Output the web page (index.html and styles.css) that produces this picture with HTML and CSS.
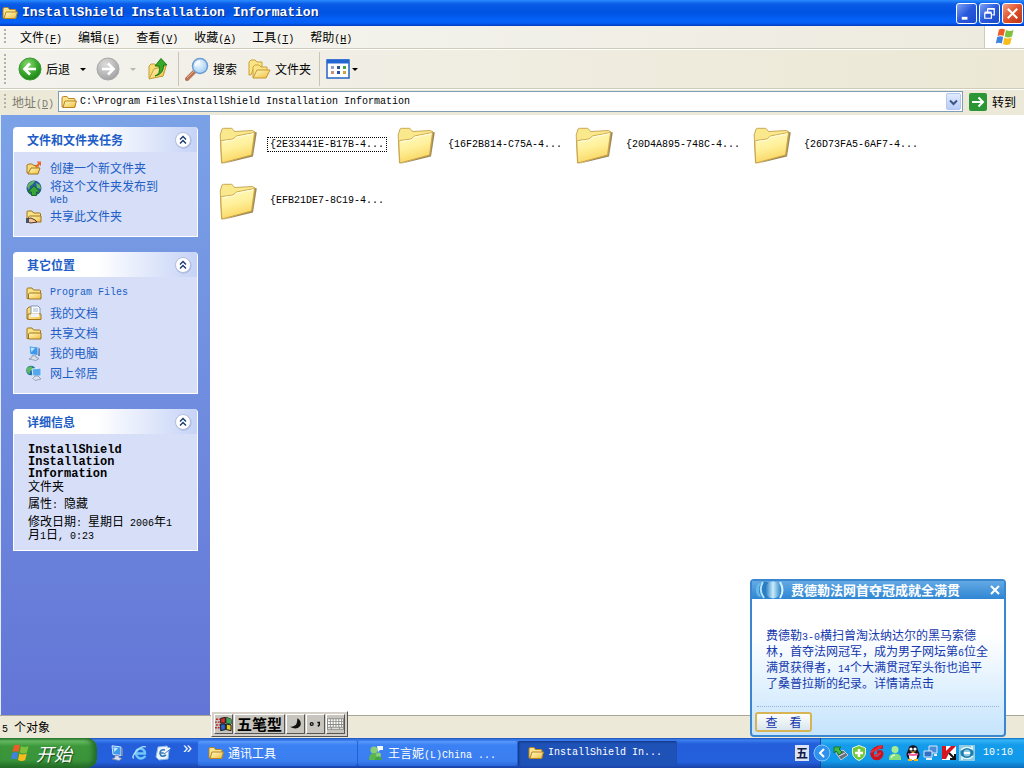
FILE: index.html
```html
<!DOCTYPE html>
<html lang="zh-CN">
<head>
<meta charset="utf-8">
<title>InstallShield Installation Information</title>
<link rel="stylesheet" href="styles.css">
</head>
<body>
<svg class="defs" aria-hidden="true">
  <defs>
    <linearGradient id="gold" x1="0" y1="0" x2="1" y2="1"><stop offset="0" stop-color="#fffbc4"/><stop offset="1" stop-color="#f0bd3c"/></linearGradient>
    <linearGradient id="goldBig" x1="0.2" y1="0" x2="0.5" y2="1"><stop offset="0" stop-color="#fffac4"/><stop offset="0.5" stop-color="#fff09a"/><stop offset="1" stop-color="#f9d35c"/></linearGradient>
    <radialGradient id="green" cx="0.4" cy="0.3" r="0.8"><stop offset="0" stop-color="#8edb74"/><stop offset="0.55" stop-color="#37a52b"/><stop offset="1" stop-color="#157a12"/></radialGradient>
    <radialGradient id="grey" cx="0.4" cy="0.3" r="0.8"><stop offset="0" stop-color="#dcdcdc"/><stop offset="1" stop-color="#9c9c9c"/></radialGradient>
    <radialGradient id="sky" cx="0.4" cy="0.35" r="0.8"><stop offset="0" stop-color="#f4fbff"/><stop offset="1" stop-color="#8fc3f1"/></radialGradient>
    <linearGradient id="drum" x1="0" x2="1"><stop offset="0" stop-color="#1c76bd"/><stop offset="0.5" stop-color="#c8ecfb"/><stop offset="1" stop-color="#2d86c9"/></linearGradient>
  </defs>
  <symbol id="folder" viewBox="0 0 16 16">
    <path d="M1 13V4Q1 2.500 2.500 2.500H6L7.500 4.500H13Q14 4.500 14 6V13Z" fill="#fbe48c" stroke="#b78523"/>
    <path d="M2 13.500 4 7H15.500L13.500 13.500Z" fill="url(#gold)" stroke="#b78523"/>
  </symbol>
  <symbol id="folder-closed" viewBox="0 0 16 16">
    <path d="M1 13.500V4Q1 3 2 3H6L7.500 5H13.500Q14.500 5 14.500 6V13.500Z" fill="#fae384" stroke="#a0721c"/>
    <path d="M3.500 8H15V14H2.500V9Z" fill="url(#gold)" stroke="#a0721c"/>
  </symbol>
  <symbol id="folder-big" viewBox="0 0 38 38">
    <path d="M3 37 34 29.500 37.800 5.500 35 4.500 32 27.500Z" fill="#806c38" opacity="0.8"/>
    <path d="M1.200 8 3 2 4.500 1.300 12.500 1.300 14 2.500 15.500 4.500 33.500 3.500 36 5 33 28 2.500 36Z" fill="#fae88c" stroke="#bd9440" stroke-width="0.8"/>
    <path d="M1.800 14.500 3 13.500 14 12 17.500 9 35.500 5.500 32.500 28 2.800 36Z" fill="url(#goldBig)" stroke="#c49a3d" stroke-width="0.8"/>
    <path d="M3 14.800 14.500 13 18 10 34.500 6.800" fill="none" stroke="#fffde4"/>
  </symbol>
  <symbol id="flag" viewBox="0 0 20 18">
    <path d="M4 1.500Q7 0 10 1.500L8.500 8Q5.500 6.500 2.500 8Z" fill="#ee5b24"/>
    <path d="M11 2Q14.500 4 18.500 2L17 8.500Q13 10.500 9.700 8.500Z" fill="#7fc13a"/>
    <path d="M2.200 9Q5.500 7.500 8.200 9L6.800 15.500Q3.800 14 .8 15.500Z" fill="#3f82e0"/>
    <path d="M9.300 9.500Q12.500 11.500 16.800 9.500L15.200 16Q11.500 18 8 16Z" fill="#f8bd1d"/>
  </symbol>
  <symbol id="computer" viewBox="0 0 16 16">
    <path d="M3 .8 12 2V10.500L4 9.500Z" fill="#3e98ee" stroke="#d4e8fb"/>
    <path d="M4.500 2.500 9 3 5.500 7Z" fill="#c3e7ff"/>
    <path d="M12.500 2 14 4V11L12 11Z" fill="#6f87b2"/>
    <path d="M6 10.500 10 11V12.500L13 13.500 10 15.500 3 14 6 12.500Z" fill="#dce2ec" stroke="#7b86a5" stroke-width="0.7"/>
  </symbol>
  <symbol id="chevrons" viewBox="0 0 18 18">
    <circle cx="9.500" cy="9.700" r="8" fill="#7f8fc0" opacity="0.45"/>
    <circle cx="9" cy="9" r="7.500" fill="#fff" stroke="#b5bfdf"/>
    <path d="M6 8.500 9 5.500 12 8.500M6 12.500 9 9.500 12 12.500" fill="none" stroke="#17386e" stroke-width="1.400"/>
  </symbol>
</svg>

<div class="desktop">
  <header class="titlebar">
    <svg class="i16"><use href="#folder"/></svg>
    <h1>InstallShield Installation Information</h1>
    <div class="winbtns">
      <button class="winbtn" aria-label="最小化"><svg viewBox="0 0 20 20"><path d="M5 15H11" stroke="#fff" stroke-width="3"/></svg></button>
      <button class="winbtn" aria-label="还原"><svg viewBox="0 0 20 20"><path d="M5 9.500H12V15H5ZM5 8.500H12M8 8V5.500H15V11.500H13M8 4.800H15.500" fill="none" stroke="#fff" stroke-width="1.300"/></svg></button>
      <button class="winbtn close" aria-label="关闭"><svg viewBox="0 0 20 20"><path d="M5 5 15 15M15 5 5 15" stroke="#fff" stroke-width="2.200"/></svg></button>
    </div>
  </header>

  <nav class="menubar">
    <span class="grip"></span>
    <button>文件<span class="en">(<u>F</u>)</span></button>
    <button>编辑<span class="en">(<u>E</u>)</span></button>
    <button>查看<span class="en">(<u>V</u>)</span></button>
    <button>收藏<span class="en">(<u>A</u>)</span></button>
    <button>工具<span class="en">(<u>T</u>)</span></button>
    <button>帮助<span class="en">(<u>H</u>)</span></button>
    <span class="brand"><svg><use href="#flag"/></svg></span>
  </nav>

  <div class="toolbar">
    <span class="grip"></span>
    <button class="tool"><svg class="i24" viewBox="0 0 24 24"><circle cx="12" cy="12" r="11" fill="url(#green)" stroke="#3b9a31"/><path d="M18 12H7M12 6.500 6.500 12 12 17.500" fill="none" stroke="#fff" stroke-width="2.600"/></svg>后退<i class="arrow"></i></button>
    <button class="tool" aria-label="前进" disabled><svg class="i24" viewBox="0 0 24 24"><circle cx="12" cy="12" r="11" fill="url(#grey)" stroke="#a9a9a9"/><path d="M6 12H17M12 6.500 17.500 12 12 17.500" fill="none" stroke="#fff" stroke-width="2.600"/></svg><i class="arrow dim"></i></button>
    <button class="tool" aria-label="向上"><svg class="i24" viewBox="0 0 24 24"><path d="M3 21V9L5 7H9L11 9H20L17 19Z" fill="#f7dc75" stroke="#c69d34"/><path d="M3 22 8 12 20 9 17 19Z" fill="url(#gold)" stroke="#c69d34"/><path d="M9 19Q15 17 13 9H9L15 1.500 21 8H17.500Q18 17 9 19Z" fill="#36a928" stroke="#1b7917"/></svg></button>
    <span class="sep"></span>
    <button class="tool"><svg class="i24" viewBox="0 0 24 24"><path d="M2 22 10 14" stroke="#ba7455" stroke-width="4" stroke-linecap="round"/><path d="M2 21 9 14" stroke="#e8ad88"/><circle cx="15" cy="9" r="7.500" fill="url(#sky)" stroke="#6c9bd4" stroke-width="1.500"/><path d="M10.500 9Q11 5 15 4.500" fill="none" stroke="#fff" stroke-width="1.500"/></svg>搜索</button>
    <button class="tool"><svg class="i24" viewBox="0 0 24 24"><path d="M2 18V5L4 3H8L10 5H15V10H7L4 18Z" fill="#fae586" stroke="#cda138"/><path d="M6 21V10L8 8H12L14 10H20V14" fill="#fae586" stroke="#cda138"/><path d="M6 21 10 13H23L19 21Z" fill="url(#gold)" stroke="#c6952e"/></svg>文件夹</button>
    <span class="sep"></span>
    <button class="tool views" aria-label="查看方式"><svg class="i24" viewBox="0 0 24 24"><rect x="1" y="3" width="22" height="18" fill="#fff" stroke="#2464c6" stroke-width="1.500"/><path d="M1 4.500H23" stroke="#2366d2" stroke-width="4"/><path d="M5 9h3v3H5z" fill="#8ea0c4"/><path d="M11 9h3v3h-3z" fill="#35558e"/><path d="M17 9h3v3h-3z" fill="#40a73a"/><path d="M5 14h3v3H5z" fill="#cf8f78"/><path d="M11 14h3v3h-3z" fill="#2952aa"/><path d="M17 14h3v3h-3z" fill="#d6a238"/></svg><i class="arrow"></i></button>
  </div>

  <form class="addressbar">
    <span class="grip"></span>
    <label for="address">地址<span class="en">(<u>D</u>)</span></label>
    <div class="combo">
      <svg class="i16"><use href="#folder"/></svg>
      <input id="address" type="text" value="C:\Program Files\InstallShield Installation Information">
      <button type="button" aria-label="展开"><svg viewBox="0 0 13 17"><path d="M3 6.500 6.500 10 10 6.500" fill="none" stroke="#3b5684" stroke-width="2"/></svg></button>
    </div>
    <button type="button" class="go"><svg viewBox="0 0 18 18"><rect width="18" height="18" rx="2" fill="#2c9637"/><path d="M3 9H14M9.500 4.500 14 9 9.500 13.500" fill="none" stroke="#fff" stroke-width="2"/></svg>转到</button>
  </form>

  <div class="main">
    <aside class="sidebar">
      <section class="panel">
        <h2>文件和文件夹任务<button aria-label="折叠"><svg><use href="#chevrons"/></svg></button></h2>
        <ul>
          <li><svg class="i16" viewBox="0 0 16 16"><path d="M1 13V5L3 4H6L8 5.500H12V13Z" fill="#f8db76" stroke="#a5761d"/><path d="M2 14 5 8H14L12 14Z" fill="url(#gold)" stroke="#a5761d"/><path d="M11 1.500 15 1.500 15 6 13.500 5 10 8 9 6 12 3.500Z" fill="#ed6829"/></svg><a href="#">创建一个新文件夹</a></li>
          <li class="double"><svg class="i16" viewBox="0 0 16 16"><circle cx="8" cy="8" r="7.500" fill="#235e9b"/><path d="M1 6Q5 0 9 1L7 4 4 6 3 10ZM10 3 14 5 15 9 11 8Z" fill="#62b563"/><path d="M8 6 14 12H10.500V15.500H5.500V12H2Z" fill="#3ba53b" stroke="#176b25"/></svg><a href="#">将这个文件夹发布到<br><span class="en">Web</span></a></li>
          <li><svg class="i16" viewBox="0 0 16 16"><use href="#folder-closed"/><path d="M0 11 5 10 9 12 11 14 5 15 0 14Z" fill="#f5c398" stroke="#513525"/><path d="M0 10.500H3V15H0Z" fill="#42536a"/></svg><a href="#">共享此文件夹</a></li>
        </ul>
      </section>
      <section class="panel">
        <h2>其它位置<button aria-label="折叠"><svg><use href="#chevrons"/></svg></button></h2>
        <ul>
          <li><svg class="i16"><use href="#folder-closed"/></svg><a href="#" class="en">Program Files</a></li>
          <li><svg class="i16" viewBox="0 0 16 16"><path d="M1 14V4L3 2H6V14Z" fill="#f8dc76" stroke="#a4771f"/><path d="M5 1H12L14 3V11H5Z" fill="#fff" stroke="#7b96b9"/><path d="M7 4H12M7 6H12" stroke="#9db4d4"/><path d="M2 9H15V14.500H2Z" fill="url(#gold)" stroke="#a4771f"/><path d="M5 8.500H13V12H5Z" fill="#edf4fc"/></svg><a href="#">我的文档</a></li>
          <li><svg class="i16"><use href="#folder-closed"/></svg><a href="#">共享文档</a></li>
          <li><svg class="i16"><use href="#computer"/></svg><a href="#">我的电脑</a></li>
          <li><svg class="i16" viewBox="0 0 16 16"><circle cx="5" cy="5.500" r="4.800" fill="#2474a2"/><path d="M1 3 5 1 7 4 4 6 4 9 1 7Z" fill="#5fbb5a"/><path d="M6 4 15 3V11L7 11Z" fill="#53a8ef" stroke="#dcebfb"/><path d="M9 11H12L15 14 9 15.500 7 13.500Z" fill="#dde3ee" stroke="#7c89a6" stroke-width="0.700"/></svg><a href="#">网上邻居</a></li>
        </ul>
      </section>
      <section class="panel">
        <h2>详细信息<button aria-label="折叠"><svg><use href="#chevrons"/></svg></button></h2>
        <div class="details">
          <strong>InstallShield<br>Installation<br>Information</strong>
          <p>文件夹</p>
          <p>属性<span class="en">: </span>隐藏</p>
          <p>修改日期<span class="en">: </span>星期日<span class="en"> 2006</span>年<span class="en">1</span><br>月<span class="en">1</span>日<span class="en">, 0:23</span></p>
        </div>
      </section>
    </aside>

    <main class="files">
      <button class="file focused"><svg><use href="#folder-big"/></svg><span>{2E33441E-B17B-4...</span></button>
      <button class="file"><svg><use href="#folder-big"/></svg><span>{16F2B814-C75A-4...</span></button>
      <button class="file"><svg><use href="#folder-big"/></svg><span>{20D4A895-748C-4...</span></button>
      <button class="file"><svg><use href="#folder-big"/></svg><span>{26D73FA5-6AF7-4...</span></button>
      <button class="file"><svg><use href="#folder-big"/></svg><span>{EFB21DE7-8C19-4...</span></button>
    </main>
  </div>

  <footer class="statusbar"><span class="en">5 </span>个对象</footer>

  <div class="taskbar">
    <button class="start"><svg><use href="#flag"/></svg>开始</button>
    <div class="quick">
      <svg class="i16"><use href="#computer"/></svg>
      <svg class="i16" viewBox="0 0 16 16"><path d="M13.500 11Q10 15 6 12.500 2.500 9 5 5 8 2.500 11 4.500 13 6 13 8.500H5" fill="none" stroke="#6dc7f7" stroke-width="2.400"/><path d="M2 13Q-1 13 4 6.500 10 0 14 2" fill="none" stroke="#b3e2fb" stroke-width="1.300"/></svg>
      <svg class="i16" viewBox="0 0 16 16"><path d="M3 2 12 1 14 4 13 14 4 15 1 12Z" fill="#eaf4fc" stroke="#8fb8df"/><path d="M10 5Q5 4 5 8.500 6 13 11 10M6 8H10" fill="none" stroke="#3275b6" stroke-width="1.600"/><path d="M9 8 15 3" stroke="#f4f8fb" stroke-width="2"/><path d="M9 9 15.500 4" stroke="#4d82bd"/></svg>
      <span class="more">»</span>
    </div>
    <div class="tasks">
      <button class="task"><svg class="i16"><use href="#folder"/></svg>通讯工具</button>
      <button class="task"><svg class="i16" viewBox="0 0 16 16"><circle cx="6" cy="5" r="3.500" fill="#8ad073"/><path d="M1 15Q1 8 6 8 12 8 12 15Z" fill="#5cb650"/><circle cx="10.500" cy="10" r="2.500" fill="#8ad073"/><path d="M7 15Q7 11.500 10.500 11.500 14 11.500 14 15Z" fill="#43a44c"/><path d="M9 1H15V5H12L10 7Z" fill="#f2fbff"/></svg><span>王言妮<span class="en">(L)China ...</span></span></button>
      <button class="task active"><svg class="i16"><use href="#folder"/></svg><span class="en">InstallShield In...</span></button>
    </div>
    <span class="ime-tray">五</span>
    <div class="tray">
      <button class="expand" aria-label="显示隐藏的图标"><svg viewBox="0 0 18 18"><circle cx="9" cy="9" r="8" fill="#2e91ed" stroke="#85c5fa"/><path d="M11 5 7 9 11 13" fill="none" stroke="#fff" stroke-width="2"/></svg></button>
      <svg class="i16" viewBox="0 0 16 16"><path d="M3 8 10 5 15 10 8 15Z" fill="#62717c" stroke="#c4cfd6"/><path d="M6 11 12 8" stroke="#e6eff3"/><path d="M1 2 8 2 6 4 9 7 6 10 3 6 1 8Z" fill="#40bc46" stroke="#19742a"/></svg>
      <svg class="i16" viewBox="0 0 16 16"><path d="M8 .5 14.500 3V8Q14 13 8 15.500 2 13 1.500 8V3Z" fill="#71c839" stroke="#e8f7d5"/><path d="M8 4V12M4 8H12" stroke="#fff" stroke-width="2.500"/></svg>
      <svg class="i16" viewBox="0 0 16 16"><path d="M14 2Q4 2 3 9 4 15 10 13 14 10 12 7H8" fill="none" stroke="#cf101c" stroke-width="3.500"/><path d="M2 7 13 1M5 11 12 8" stroke="#ef2b32" stroke-width="2"/></svg>
      <svg class="i16" viewBox="0 0 16 16"><circle cx="8" cy="4.500" r="3.500" fill="#a5ec93"/><path d="M2 15Q1 8.500 8 8.500 15 8.500 14 15Z" fill="#86dd7c"/><path d="M4 13Q5 10 8 10" fill="none" stroke="#d6fbcb" stroke-width="1.500"/></svg>
      <svg class="i16" viewBox="0 0 16 16"><ellipse cx="8" cy="9.500" rx="6.500" ry="6" fill="#15121b"/><circle cx="8" cy="5" r="4.800" fill="#15121b"/><ellipse cx="8" cy="11.500" rx="4" ry="3.800" fill="#fff"/><circle cx="6" cy="4" r="1.600" fill="#fff"/><circle cx="10" cy="4" r="1.600" fill="#fff"/><path d="M5 6.500H11L8 8Z" fill="#f9b917"/><path d="M3 9Q8 11 13 9" fill="none" stroke="#f262a5" stroke-width="2.200"/><path d="M3 15H7M9 15H13" stroke="#f9b917" stroke-width="2"/></svg>
      <svg class="i16" viewBox="0 0 16 16"><path d="M6 1H14V8H6Z" fill="#4c8ddb" stroke="#d6eafa"/><path d="M1 6H9V12H1Z" fill="#306fc4" stroke="#d6eafa"/><path d="M3 14H9M11 10H14" stroke="#e3f0fb" stroke-width="2"/></svg>
      <svg class="i16" viewBox="0 0 16 16"><path d="M1 1H15V15H1Z" fill="#fff"/><path d="M1 1H5V6L10 1H15L8 8 5 14H1Z" fill="#d51420"/><path d="M8 8 14 14M9 14H14V9" fill="none" stroke="#111" stroke-width="2"/></svg>
      <svg class="i16" viewBox="0 0 16 16"><rect width="16" height="16" fill="#8ccbe3"/><circle cx="8" cy="8" r="5" fill="none" stroke="#207cac" stroke-width="3"/><path d="M5 8H11" stroke="#fff" stroke-width="2"/><path d="M2 5Q7 0 13 4V1M14 11Q9 16 3 12V15" fill="none" stroke="#e6fbff" stroke-width="1.500"/></svg>
      <time>10:10</time>
    </div>
  </div>

  <div class="ime">
    <button aria-label="输入法"><svg viewBox="0 0 18 18"><path d="M6 3 11 2V8H6ZM12 2 17 4V9L12 8Z" fill="#d52f2f" stroke="#111"/><path d="M6 9H11V15L6 16Z" fill="#2d63cb" stroke="#111"/><path d="M12 9 17 10V16L12 15Z" fill="#e4c92c" stroke="#111"/><path d="M12 2 17 4V9L12 8Z" fill="#38a65a"/><path d="M1 4H5M0 7H5M1 10H5M0 13H5" stroke="#b22" stroke-width="1.500" stroke-dasharray="2 1"/></svg></button>
    <button class="ime-name">五笔型</button>
    <button aria-label="半角"><svg viewBox="0 0 18 18"><path d="M11 3Q16 6 14 11 10 16 3 12 8 12 10 9 11 6 11 3Z" fill="#111"/></svg></button>
    <button aria-label="标点"><svg viewBox="0 0 18 18"><circle cx="5" cy="9" r="1.500" fill="none" stroke="#111" stroke-width="1.300"/><path d="M11 7.500H13V10L11.500 11.500" fill="none" stroke="#111" stroke-width="1.600"/></svg></button>
    <button aria-label="软键盘"><svg viewBox="0 0 18 18"><path d="M0 3H18V15H0Z" fill="#8b8b86"/><path d="M1 5H17M1 8H17M1 11H17" stroke="#fff" stroke-width="2" stroke-dasharray="2 1"/><path d="M1 13.500H4M5 13.500H13M14 13.500H17" stroke="#fff"/></svg></button>
  </div>

  <section class="popup">
    <h2><svg viewBox="0 0 32 18"><ellipse cx="6" cy="9" rx="4" ry="7" fill="#65b8e8"/><ellipse cx="11" cy="9" rx="6" ry="8.500" fill="#2a7fc4"/><path d="M9 1Q4 9 10 17" stroke="#b7e3fa" stroke-width="2" fill="none"/><ellipse cx="19" cy="9" rx="8" ry="8.500" fill="url(#drum)"/><path d="M26 1Q31 9 26 17" stroke="#d7f2ff" stroke-width="2" fill="none"/></svg>费德勒法网首夺冠成就全满贯<button aria-label="关闭"><svg viewBox="0 0 12 12"><path d="M2 2 10 10M10 2 2 10" stroke="#fff" stroke-width="2"/></svg></button></h2>
    <p>费德勒<span class="en">3-0</span>横扫曾淘汰纳达尔的黑马索德<br>林，首夺法网冠军，成为男子网坛第<span class="en">6</span>位全<br>满贯获得者，<span class="en">14</span>个大满贯冠军头衔也追平<br>了桑普拉斯的纪录。详情请点击</p>
    <div class="actions"><button>查　看</button></div>
  </section>
</div>
</body>
</html>
```
FILE: styles.css
```css
* { box-sizing: border-box; }

body {
  margin: 0;
  font: 12px/16px "Noto Sans CJK SC", sans-serif;
  color: #000;
}

button {
  margin: 0;
  padding: 0;
  border: 0;
  background: none;
  font: inherit;
  color: inherit;
}

svg { display: block; flex: none; }
h1, h2, p, ul { margin: 0; padding: 0; }
a { color: #215dc6; text-decoration: none; }

.defs { position: absolute; width: 0; height: 0; }
.en { font: 10px/8px "Liberation Mono", monospace; white-space: pre; }
.i16 { width: 16px; height: 16px; }
.i24 { width: 24px; height: 24px; }

.desktop {
  position: relative;
  display: flex;
  flex-direction: column;
  min-height: 100vh;
  background: #ece9d8;
}

/* Title bar */
.titlebar {
  display: flex;
  align-items: center;
  gap: 4px;
  height: 26px;
  padding: 0 1px 0 2px;
  color: #fff;
  background: linear-gradient(#2b8cff 0, #0a5be6 4px, #0053e1 12px, #0561f8 20px, #0460f5 23px, #003cc0 26px);
}
.titlebar h1 {
  flex: 1;
  font: bold 13px/20px "Liberation Mono", monospace;
  text-shadow: 1px 1px #0a2a7a;
}
.winbtns { display: flex; gap: 2px; }
.winbtn {
  width: 21px;
  height: 21px;
  border: 1px solid #fff;
  border-radius: 3px;
  background: linear-gradient(135deg, #7ea2f4, #2859dd 50%, #1c4bcb);
}
.winbtn.close { background: linear-gradient(135deg, #f0a184, #e0502b 50%, #b93716); }

/* Menu */
.grip {
  width: 2px;
  height: 16px;
  margin-left: 4px;
  background: repeating-linear-gradient(#b5b29e 0 2px, transparent 2px 4px);
}
.menubar {
  display: flex;
  align-items: center;
  height: 23px;
  border-bottom: 1px solid #d0ccba;
  background: linear-gradient(90deg, #f6f5f1, #edebdf);
}
.menubar .grip { margin-right: 6px; }
.menubar button { padding: 0 8px; white-space: nowrap; }
.brand {
  display: flex;
  align-items: center;
  justify-content: center;
  align-self: stretch;
  width: 40px;
  margin-left: auto;
  border-left: 1px solid #d0ccba;
  background: #fff;
}
.brand svg { width: 20px; height: 18px; }

/* Toolbar */
.toolbar {
  display: flex;
  align-items: center;
  height: 40px;
  border-top: 1px solid #fff;
  border-bottom: 1px solid #d0ccba;
  background: linear-gradient(90deg, #f3f2ed, #ece8d5);
}
.toolbar .grip { height: 30px; margin-right: 12px; }
.tool { display: flex; align-items: center; gap: 4px; margin-right: 10px; }
.arrow {
  margin-left: 6px;
  border: 3px solid transparent;
  border-top-color: #000;
  border-bottom: 0;
}
.arrow.dim { border-top-color: #bbb8a9; }
.tool:has(+ .sep) { margin-right: 6px; }
.sep { width: 1px; height: 34px; margin-right: 6px; background: #c9c5b4; }
.tool + .tool + .sep { margin-left: 2px; }
.views { gap: 0; }
.views .arrow { margin-left: 2px; }

/* Address */
.addressbar {
  display: flex;
  align-items: center;
  height: 26px;
  padding-bottom: 2px;
  border-top: 1px solid #fff;
  background: #ece9d8;
}
.addressbar label { margin: 0 4px 0 6px; color: #7d7b70; }
.combo {
  display: flex;
  flex: 1;
  align-items: center;
  gap: 3px;
  height: 21px;
  padding: 0 1px 0 2px;
  border: 1px solid #7f9db9;
  background: #fff;
}
.combo input {
  flex: 1;
  min-width: 0;
  padding: 0;
  border: 0;
  outline: 0;
  background: transparent;
  font: 10px/16px "Liberation Mono", monospace;
}
.combo button {
  width: 15px;
  height: 17px;
  border: 1px solid #b3c7f0;
  border-radius: 2px;
  background: linear-gradient(#e1eafe, #b9cdf7);
}
.go { display: flex; align-items: center; gap: 5px; padding: 0 8px 0 6px; }
.go svg { width: 18px; height: 18px; }

/* Work area */
.main { display: flex; flex: 1; }
.sidebar {
  display: flex;
  flex-direction: column;
  gap: 15px;
  width: 210px;
  padding: 12px;
  border-left: 1px solid #e4ecfb;
  background: linear-gradient(#7ba2e7, #6375d6);
}
.panel { border: 1px solid #fff; border-top: 0; border-radius: 4px 4px 0 0; background: #d6dff7; }
.panel h2 {
  display: flex;
  align-items: center;
  justify-content: space-between;
  height: 25px;
  padding: 0 5px 0 13px;
  border-radius: 4px 4px 0 0;
  background: linear-gradient(90deg, #fff 45%, #c6d3f7);
  font-size: 12px;
  line-height: 16px;
  color: #215dc6;
}
.panel h2 svg { width: 18px; height: 18px; }
.panel ul { padding: 6px 12px 10px; list-style: none; }
.panel li { display: flex; align-items: center; gap: 8px; height: 20px; }
.panel .double { height: 28px; line-height: 12px; }
.panel .double svg { align-self: flex-start; margin-top: 2px; }
.details { padding: 10px 14px 9px; }
.details strong { display: block; font: bold 12px/12px "Liberation Mono", monospace; }
.details p { margin-bottom: 5px; line-height: 12px; white-space: nowrap; }
.details p:last-child { margin-bottom: 0; }

.files {
  display: grid;
  flex: 1;
  grid-template-columns: repeat(auto-fill, 178px);
  grid-auto-rows: 56px;
  align-content: start;
  padding: 12px 0 0 9px;
  background: #fff;
}
.file { display: flex; gap: 10px; align-items: flex-start; text-align: left; }
.file svg { width: 38px; height: 38px; }
.file span {
  width: 120px;
  margin-top: 10px;
  padding: 0 2px;
  border: 1px solid transparent;
  font: 10px/13px "Liberation Mono", monospace;
  white-space: nowrap;
}
.focused span { border: 1px dotted #000; }

.statusbar {
  height: 23px;
  padding: 3px 2px;
  border-top: 1px solid #a9a697;
  background: #ece9d8;
}

/* Taskbar */
.taskbar {
  display: flex;
  align-items: center;
  height: 30px;
  color: #fff;
  background: linear-gradient(#1f4fb5 0, #3a80f0 2px, #245edb 6px, #2460dc 24px, #1941a5 30px);
}
.start {
  display: flex;
  align-items: center;
  gap: 6px;
  align-self: stretch;
  width: 97px;
  padding-left: 10px;
  border-radius: 0 10px 10px 0;
  background: linear-gradient(#2f7a2f 0, #6bbf66 3px, #3c983b 8px, #3a943a 22px, #226b25 30px);
  box-shadow: inset -4px 0 5px #236b29;
  font: italic 18px/24px "Noto Sans CJK SC", sans-serif;
  text-shadow: 1px 1px 1px #1b481b;
}
.start svg { width: 20px; height: 18px; }
.quick { display: flex; align-items: center; gap: 7px; width: 101px; padding-left: 12px; }
.more { margin: 0 0 10px 5px; font: 16px/16px "Liberation Sans", sans-serif; }
.tasks { display: flex; flex: 1; gap: 1px; min-width: 0; }
.task {
  display: flex;
  flex: 0 1 159px;
  align-items: center;
  gap: 4px;
  height: 25px;
  padding-left: 10px;
  border-radius: 2px;
  background: linear-gradient(#5b9bfa 0, #3c81f3 4px, #3a7ef0 20px, #2a67d8 25px);
  white-space: nowrap;
}
.task.active { background: #1e52b7; box-shadow: inset 1px 1px 2px #12357f; }
.ime-tray {
  width: 14px;
  height: 16px;
  margin-right: 11px;
  background: #dce3f5;
  color: #111a44;
  font-weight: bold;
  text-align: center;
}
.tray {
  display: flex;
  align-items: center;
  gap: 2px;
  align-self: stretch;
  width: 204px;
  border-left: 1px solid #0f4a9f;
  background: linear-gradient(#0c6bc0 0, #35b4f7 2px, #149bea 7px, #129aea 23px, #0c6dbb 30px);
}
.expand { margin-left: -8px; }
.expand svg { width: 18px; height: 18px; }
.tray time { margin-left: 6px; font: 10px/16px "Liberation Mono", monospace; }

/* Input method bar */
.ime {
  position: absolute;
  left: 211px;
  bottom: 31px;
  display: flex;
  gap: 1px;
  padding: 2px;
  border: 1px solid;
  border-color: #fff #555 #555 #fff;
  background: #d4d0c8;
}
.ime button {
  height: 20px;
  border: 1px solid;
  border-color: #fff #555 #555 #fff;
  background: #c8c5be;
}
.ime svg { width: 17px; height: 18px; }
.ime .ime-name { padding: 0 2px; font-size: 15px; line-height: 18px; font-weight: bold; }

/* News popup */
.popup {
  position: absolute;
  right: 18px;
  bottom: 31px;
  width: 256px;
  border: 2px solid #3a86cf;
  border-radius: 4px;
  background: linear-gradient(#fff 35%, #c5e4fd);
  color: #1438ad;
}
.popup h2 {
  display: flex;
  align-items: center;
  height: 18px;
  padding-left: 2px;
  background: linear-gradient(#64a9e4, #2e86d3);
  color: #fff;
  font-size: 13px;
  line-height: 16px;
}
.popup h2 > svg { width: 32px; height: 18px; margin-right: 5px; }
.popup h2 button { margin: 0 3px 0 auto; }
.popup h2 button svg { width: 12px; height: 12px; }
.popup p { padding: 28px 0 15px 14px; white-space: nowrap; }
.actions { margin: 0 5px; padding: 5px 0 3px; border-top: 1px dotted #8fb3d6; }
.actions button {
  width: 57px;
  height: 20px;
  margin-left: -2px;
  border: 2px solid #d7b557;
  border-radius: 3px;
  background: linear-gradient(#fefefa, #d9e6ee);
  line-height: 16px;
}
```
